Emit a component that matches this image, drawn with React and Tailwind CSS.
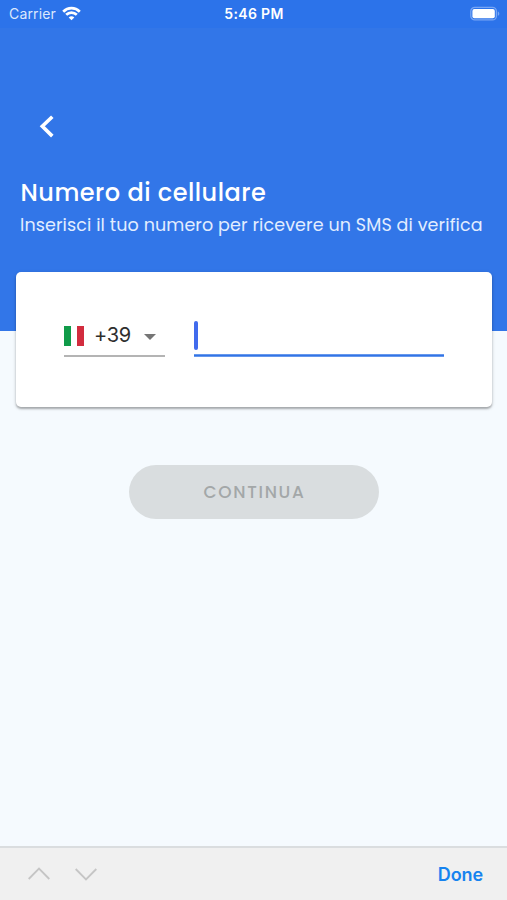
function StatusBar() {
  return (
    <div className="grid h-7 grid-cols-3 items-center bg-[#2c73ea] pl-[9px] pr-[7px] text-white">
      <div className="flex items-center gap-[6px]">
        <span className="text-[14px] leading-7 tracking-[0.15px] text-[#dce8fd]">Carrier</span>
        <svg className="-mt-[2px]" width="19" height="15" viewBox="0 0 19 15" fill="none" stroke="currentColor" strokeWidth="2.7">
          <path d="M1.2 5.7C5.8 1 13.2 1 17.8 5.7" />
          <path d="M4.2 8.8c3-3 7.6-3 10.6 0" />
          <path d="M9.5 14.2 6.7 11.4c1.6-1.5 4-1.5 5.6 0z" fill="currentColor" stroke="none" />
        </svg>
      </div>
      <span className="-ml-[1px] text-center text-[14px] font-semibold leading-7 tracking-[0.35px]">5:46 PM</span>
      <svg className="-mt-[2px] justify-self-end" width="30" height="15" viewBox="0 0 30 15">
        <rect x="0.8" y="1.3" width="25.6" height="12.6" rx="4" fill="none" stroke="#78a6f4" strokeWidth="1.3" />
        <rect x="2.4" y="3" width="22.4" height="9.2" rx="2" fill="white" />
        <path d="M27.8 5.4c2 .7 2 3.7 0 4.4z" fill="#78a6f4" />
      </svg>
    </div>
  );
}

function PhoneCard() {
  return (
    <div className="ml-[15.5px] mr-[15px] mt-[34px] flex h-[134.5px] rounded-[5px] bg-white pl-[48.5px] pt-[48px] shadow-[0_2px_2px_rgba(0,0,0,0.26),0_1px_4px_rgba(0,0,0,0.14)]">
      <div className="flex h-[37px] w-[101px] items-center border-b-2 border-[#b4b4b4] pb-[6px]">
        <div className="mt-[2px] flex h-5 w-5">
          <div className="flex-1 bg-[#109b49]" />
          <div className="flex-1 bg-white" />
          <div className="flex-1 bg-[#d22c3e]" />
        </div>
        <span className="ml-[10px] w-[39px] text-[20px] leading-6 tracking-[-0.3px] text-[#2e2e2e]">+39</span>
        <svg className="ml-[11px] mt-[4px]" width="12" height="6" viewBox="0 0 12 6" fill="#757575">
          <path d="M0 0h12L6 6z" />
        </svg>
      </div>
      <div className="ml-[29px] flex h-[36px] w-[250px] flex-col justify-between">
        <div className="mt-[1px] h-[29px] w-1 rounded-full bg-[#416bed]" />
        <svg className="-mb-[1px]" width="250" height="3" viewBox="0 0 250 3">
          <path d="M0 1.4h250" stroke="#3274e6" strokeWidth="2.5" />
        </svg>
      </div>
    </div>
  );
}

export default function App() {
  return (
    <div className="flex h-[900px] w-[507px] flex-col overflow-hidden bg-[#f5fafe] font-['Inter','Liberation_Sans',sans-serif]">
      <div className="h-[330.5px] bg-[#3276e8]">
        <StatusBar />
        <svg className="ml-[39px] mt-[87px]" width="15" height="23" viewBox="0 0 15 23" fill="none" stroke="white" strokeWidth="3.6">
          <path d="M13.3 1.7 3.3 11.3l10 9.8" />
        </svg>
        <h1 className="ml-[20.5px] mt-[37px] whitespace-nowrap font-['Poppins','Inter',sans-serif] text-[24px] font-medium leading-9 tracking-[0.5px] text-white">
          Numero di cellulare
        </h1>
        <p className="ml-5 mt-[1px] whitespace-nowrap font-['Poppins','Inter',sans-serif] text-[17.5px] leading-[26px] tracking-[0.11px] text-[#e2edff]">
          Inserisci il tuo numero per ricevere un SMS di verifica
        </p>
        <PhoneCard />
      </div>
      <button className="mt-[134px] h-[54px] w-[250px] self-center rounded-full bg-[#d9dddf] pl-[2px] pt-[2px] font-['Poppins','Inter',sans-serif] text-[17px] font-medium tracking-[1.65px] text-[#a3a7a8]">
        CONTINUA
      </button>
      <div className="mt-auto flex h-[54px] items-center border-t-2 border-[#dadddf] bg-[#f0f0f0] pl-[28px] pr-[24px]">
        <svg className="-mt-[2px]" width="22" height="13" viewBox="0 0 22 13" fill="none" stroke="#c5c5c5" strokeWidth="1.8">
          <path d="M.7 12 11 1.5 21.3 12" />
        </svg>
        <svg className="ml-[25px]" width="22" height="13" viewBox="0 0 22 13" fill="none" stroke="#c5c5c5" strokeWidth="1.8">
          <path d="M.7 1 11 11.5 21.3 1" />
        </svg>
        <span className="ml-auto text-[18px] font-semibold tracking-[-0.1px] text-[#1683ef]">Done</span>
      </div>
    </div>
  );
}
